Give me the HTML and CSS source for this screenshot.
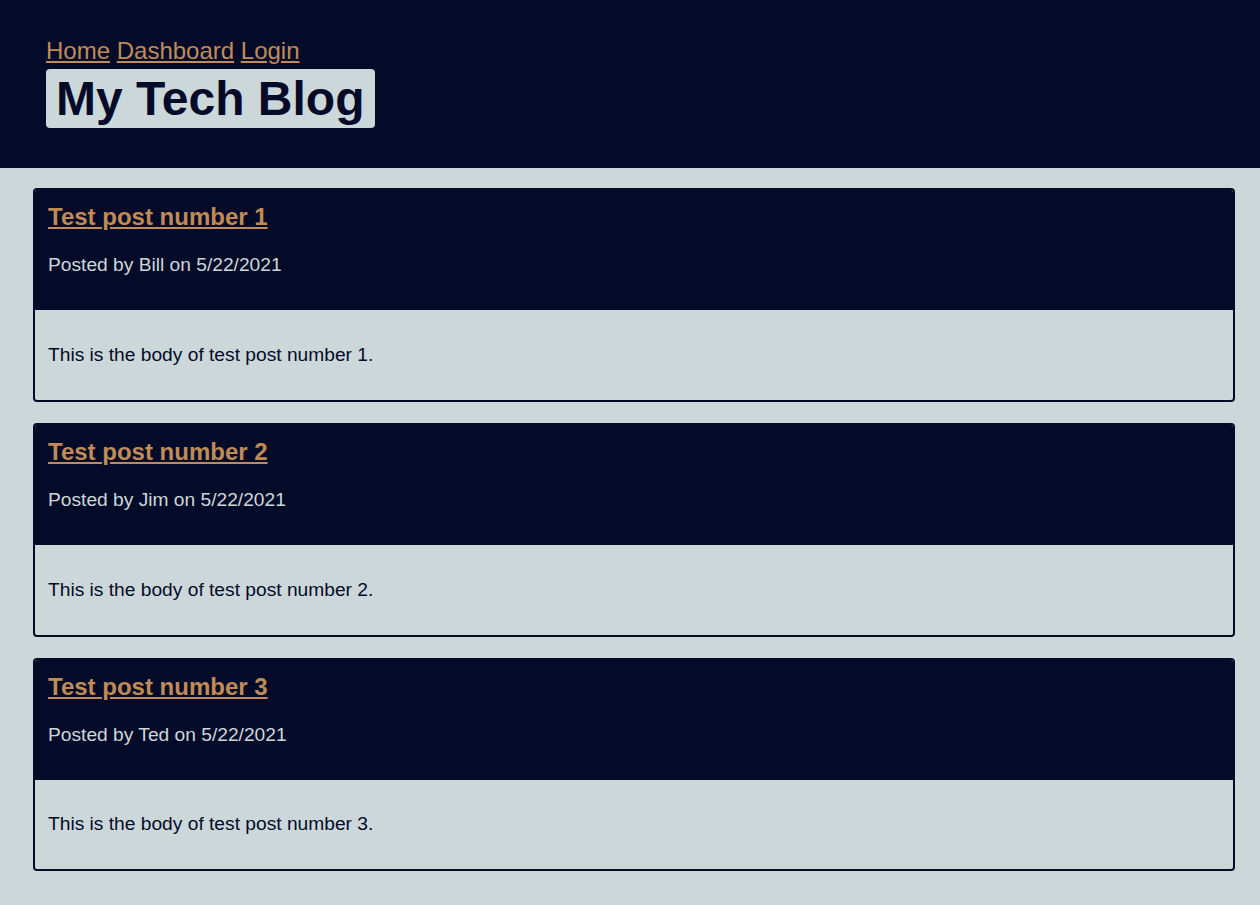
FILE: index.html
```html
<!DOCTYPE html>
<html lang="en">
<head>
<meta charset="utf-8">
<title>My Tech Blog</title>
<link rel="stylesheet" href="styles.css">
</head>
<body>
<header class="site-header">
  <nav class="nav">
    <a href="#">Home</a>
    <a href="#">Dashboard</a>
    <a href="#">Login</a>
  </nav>
  <h1 class="brand">My Tech Blog</h1>
</header>
<main class="posts">
  <article class="post">
    <div class="post-head">
      <h2 class="post-title"><a href="#">Test post number 1</a></h2>
      <p class="post-meta">Posted by Bill on 5/22/2021</p>
    </div>
    <div class="post-body">
      <p>This is the body of test post number 1.</p>
    </div>
  </article>
  <article class="post">
    <div class="post-head">
      <h2 class="post-title"><a href="#">Test post number 2</a></h2>
      <p class="post-meta">Posted by Jim on 5/22/2021</p>
    </div>
    <div class="post-body">
      <p>This is the body of test post number 2.</p>
    </div>
  </article>
  <article class="post">
    <div class="post-head">
      <h2 class="post-title"><a href="#">Test post number 3</a></h2>
      <p class="post-meta">Posted by Ted on 5/22/2021</p>
    </div>
    <div class="post-body">
      <p>This is the body of test post number 3.</p>
    </div>
  </article>
</main>
</body>
</html>
```

FILE: styles.css
```css
html, body {
  margin: 0;
  padding: 0;
}

body {
  background: #ccd7da;
  color: #040b28;
  font-family: "Liberation Sans", Arial, sans-serif;
}

.site-header {
  background: #040b28;
  padding: 37px 46px 40px;
}

.nav {
  font-size: 24px;
  line-height: 27.6px;
  margin-bottom: 4.4px;
}

.nav a {
  color: #c08b57;
  text-decoration: underline;
}

.brand {
  display: inline-block;
  margin: 0;
  padding: 2px 10.5px 2px 10px;
  background: #ccd7da;
  color: #040b28;
  font-size: 48px;
  font-weight: bold;
  line-height: 55px;
  border-radius: 4px;
}

.posts {
  padding: 20px 25px 20px 33px;
  display: flex;
  flex-direction: column;
  gap: 21px;
}

.post {
  border: 2px solid #040b28;
  border-radius: 4px;
  overflow: hidden;
}

.post-head {
  background: #040b28;
  padding: 13px 13px 33.6px;
}

.post-title {
  margin: 0 0 23.8px;
  font-size: 24px;
  line-height: 27.6px;
  font-weight: bold;
}

.post-title a {
  color: #c08b57;
  text-decoration: underline;
}

.post-meta {
  margin: 0;
  color: #ccd7da;
  font-size: 19.2px;
  line-height: 22px;
}

.post-body {
  padding: 33.8px 13px 34px;
}

.post-body p {
  margin: 0;
  font-size: 19.2px;
  line-height: 22px;
  color: #040b28;
}
```
